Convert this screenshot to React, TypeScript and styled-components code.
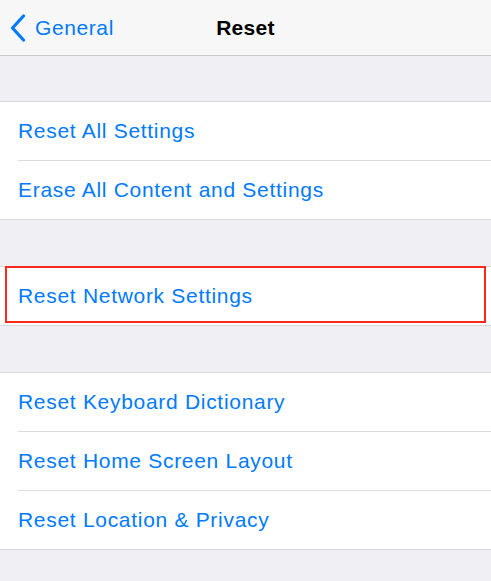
import * as React from 'react';
import styled, {createGlobalStyle} from 'styled-components';

const GlobalStyle = createGlobalStyle`
	html, body {
		margin: 0;
		padding: 0;
		background: #efeff4;
		font-family: "Liberation Sans", Arial, sans-serif;
		-webkit-font-smoothing: antialiased;
	}
`;

const Screen = styled.div`
	width: 491px;
	height: 581px;
	overflow: hidden;
	background: #efeff4;
`;

const NavBar = styled.div`
	height: 55px;
	background: #f7f7f7;
	border-bottom: 1px solid #c8c7cc;
	display: grid;
	grid-template-columns: 1fr auto 1fr;
	align-items: center;
`;

const BackButton = styled.div`
	display: flex;
	align-items: center;
	gap: 9px;
	padding-left: 10px;
	color: #007aff;
	font-size: 21px;
	letter-spacing: 0.6px;
`;

const Title = styled.div`
	font-size: 21px;
	font-weight: 600;
	color: #000;
	letter-spacing: 0.3px;
`;

const Group = styled.div<{$gap: number}>`
	margin-top: ${p => p.$gap}px;
	background: #fff;
	border-top: 1px solid #d9d9dd;
	border-bottom: 1px solid #d9d9dd;
`;

const Row = styled.div`
	position: relative;
	height: 58px;
	display: flex;
	align-items: center;
	margin-left: 18px;
	color: #007aff;
	font-size: 21px;
	letter-spacing: 0.7px;
	& + & {
		border-top: 1px solid #dcdce0;
	}
`;

const Highlight = styled.div`
	position: absolute;
	left: -13px;
	right: 5px;
	top: -1px;
	bottom: 2px;
	border: 2px solid #fb2a1d;
`;

const Chevron = () => (
	<svg width="16" height="28" viewBox="0 0 16 28">
		<path d="M13.5 2 L2.5 14 L13.5 26" fill="none" stroke="#007aff" strokeWidth="3.2" strokeLinecap="round" strokeLinejoin="round"/>
	</svg>
);

const groups = [
	{gap: 45, items: ['Reset All Settings', 'Erase All Content and Settings']},
	{gap: 46, items: ['Reset Network Settings'], highlight: true},
	{gap: 46, items: ['Reset Keyboard Dictionary', 'Reset Home Screen Layout', 'Reset Location & Privacy']},
];

export default function App() {
	return (
		<Screen>
			<GlobalStyle/>
			<NavBar>
				<BackButton><Chevron/>General</BackButton>
				<Title>Reset</Title>
				<div/>
			</NavBar>
			{groups.map((g, i) => (
				<Group key={i} $gap={g.gap}>
					{g.items.map(label => (
						<Row key={label}>
							{label}
							{g.highlight && <Highlight/>}
						</Row>
					))}
				</Group>
			))}
		</Screen>
	);
}
